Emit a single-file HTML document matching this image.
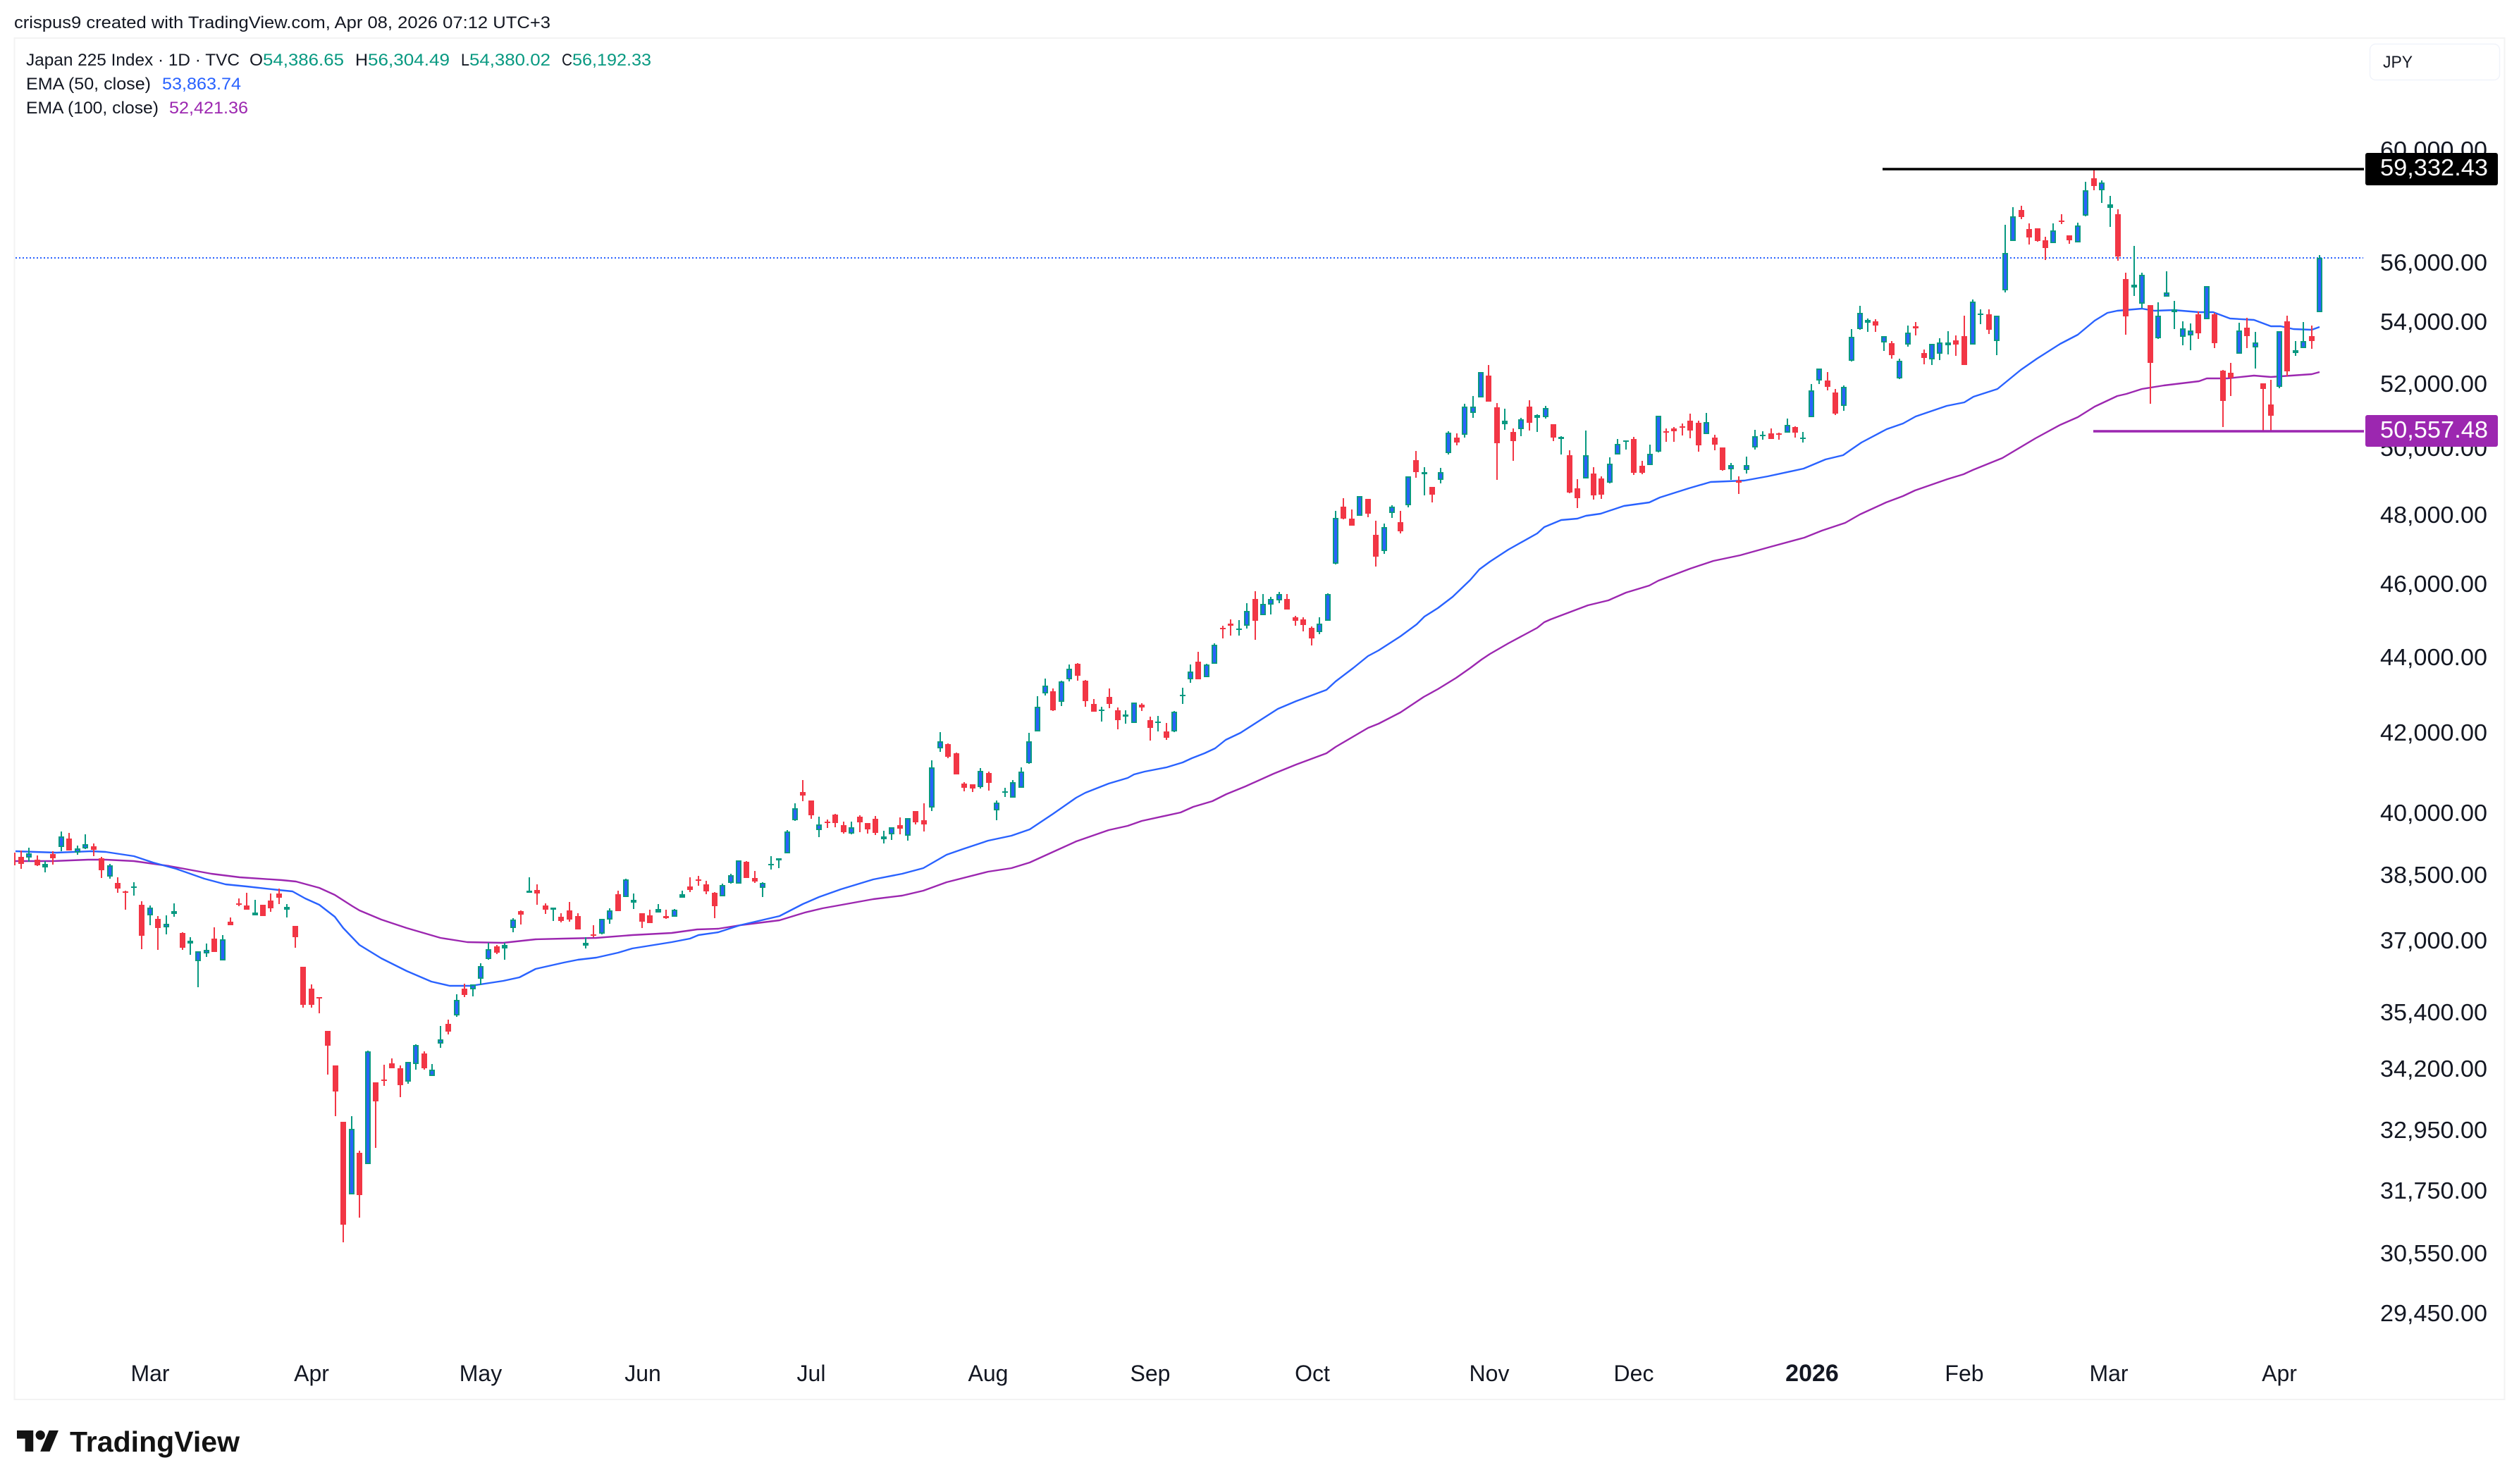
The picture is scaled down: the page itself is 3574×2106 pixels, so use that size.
<!DOCTYPE html>
<html lang="en">
<head>
<meta charset="utf-8">
<title>Japan 225 Index</title>
<style>
html,body{margin:0;padding:0;background:#fff;width:3574px;height:2106px;overflow:hidden}
svg{display:block}
text{font-family:"Liberation Sans",sans-serif;fill:#131722}
</style>
</head>
<body>
<svg width="3574" height="2106" viewBox="0 0 3574 2106" xmlns="http://www.w3.org/2000/svg">
<rect width="3574" height="2106" fill="#fff"/>
<rect x="20.5" y="54" width="3533" height="1932" fill="none" stroke="#f3f3f3" stroke-width="2"/>

<path d="M22 366H3353" stroke="#2962ff" stroke-width="2" stroke-dasharray="2 3" fill="none"/>

<polyline fill="none" stroke="#9c27b0" stroke-width="2.4" stroke-linejoin="round" points="22,1222 75,1222 125,1220 150,1220 190,1222 240,1229 300,1240 340,1245 400,1249 420,1251 453,1260 475,1270 500,1286 510,1292 541,1305 577,1317 625,1331 663,1337 714,1338 760,1333 800,1332 846,1331 897,1327 953,1324 989,1319 1019,1318 1050,1313 1106,1306 1142,1295 1167,1289 1239,1276 1280,1271 1310,1264 1343,1252 1402,1237 1435,1232 1461,1224 1494,1209 1527,1194 1573,1178 1600,1172 1620,1165 1675,1153 1693,1145 1720,1137 1740,1127 1767,1116 1807,1098 1839,1085 1882,1069 1895,1060 1941,1033 1956,1027 1987,1011 2020,989 2040,978 2066,962 2086,948 2102,936 2114,928 2140,913 2181,891 2191,883 2200,879 2253,859 2282,852 2307,841 2340,831 2353,824 2398,807 2431,796 2469,788 2512,776 2560,763 2585,753 2618,742 2639,730 2676,713 2700,704 2717,696 2763,680 2786,673 2799,667 2841,650 2888,622 2923,603 2948,592 2972,577 3004,562 3017,559 3039,552 3070,547 3120,541 3131,537 3160,537 3198,533 3222,535 3280,531 3291,528"/>
<polyline fill="none" stroke="#2962ff" stroke-width="2.4" stroke-linejoin="round" points="22,1208 50,1209 80,1210 130,1208 150,1209 190,1215 217,1224 250,1233 290,1247 320,1255 350,1258 395,1263 415,1265 433,1275 453,1284 475,1301 487,1317 510,1341 541,1360 577,1378 612,1393 638,1399 668,1399 714,1392 737,1387 760,1375 800,1366 820,1362 846,1359 877,1352 897,1346 953,1337 979,1332 991,1327 1019,1323 1050,1313 1106,1300 1139,1283 1162,1273 1193,1262 1239,1248 1280,1240 1310,1232 1343,1213 1366,1205 1402,1193 1435,1186 1461,1177 1494,1155 1527,1132 1540,1125 1573,1112 1600,1104 1609,1099 1624,1095 1655,1089 1678,1082 1691,1076 1709,1069 1724,1062 1739,1050 1760,1040 1813,1006 1839,995 1882,979 1895,967 1920,948 1941,931 1956,923 1987,903 2010,886 2021,875 2040,863 2061,847 2086,823 2099,808 2114,797 2140,780 2181,757 2191,748 2215,738 2238,736 2250,732 2271,729 2304,718 2340,713 2355,706 2396,693 2427,684 2475,682 2508,676 2559,665 2590,652 2615,646 2625,639 2641,628 2677,609 2700,601 2718,591 2762,576 2787,571 2800,563 2834,552 2867,525 2890,509 2923,488 2948,475 2972,455 2990,444 3004,441 3039,438 3057,441 3084,440 3120,443 3140,443 3164,452 3198,454 3222,463 3236,463 3254,467 3280,468 3291,464"/>

<!-- red wicks -->
<path fill="none" stroke="#f23645" stroke-width="2" d="M21 1210V1228M30 1207V1233M53 1214V1229M75 1208V1227M98 1182V1207M133 1197V1215M144 1216V1246M167 1245V1267M178 1264V1291M201 1279V1347M224 1300V1348M259 1323V1348M304 1316V1351M327 1302V1313M339 1275V1286M350 1267V1291M384 1268V1294M396 1261V1283M419 1314V1345M430 1372V1430M442 1397V1430M453 1415V1438M465 1463V1525M476 1512V1584M487 1592V1763M510 1633V1728M533 1536V1629M545 1511V1541M556 1502V1516M568 1512V1557M602 1492V1518M636 1447V1468M659 1396V1415M705 1341V1354M739 1292V1312M762 1255V1284M774 1282V1297M796 1296V1309M808 1280V1308M820 1296V1319M842 1313V1330M877 1264V1293M911 1296V1317M922 1291V1310M945 1291V1304M979 1245V1266M991 1243V1257M1002 1250V1269M1014 1266V1303M1059 1222V1246M1071 1236V1253M1139 1107V1137M1151 1136V1162M1174 1163V1175M1185 1155V1174M1197 1166V1183M1220 1157V1181M1231 1168V1183M1242 1158V1185M1277 1160V1184M1299 1151V1170M1311 1140V1180M1345 1055V1076M1357 1068V1099M1368 1110V1123M1380 1113V1124M1403 1095V1122M1494 977V1009M1529 941V966M1540 965V1003M1552 992V1010M1574 977V1005M1586 1004V1035M1620 998V1009M1632 1017V1051M1655 1026V1050M1700 925V964M1735 888V906M1746 879V902M1781 839V908M1826 843V865M1838 874V888M1849 876V896M1861 889V916M1906 707V737M1918 723V746M1941 708V734M1952 739V804M1987 725V757M2009 640V678M2032 691V713M2067 615V632M2112 518V570M2124 572V681M2147 608V654M2170 568V611M2204 602V626M2227 639V700M2238 680V721M2261 663V709M2272 676V708M2318 620V674M2330 654V673M2364 608V627M2375 606V627M2387 601V618M2398 587V622M2410 597V641M2433 617V639M2444 635V668M2467 676V701M2513 608V623M2524 614V624M2547 605V621M2593 528V554M2604 552V589M2661 453V471M2684 484V509M2718 457V476M2730 496V517M2775 476V505M2787 448V518M2822 439V474M2868 292V311M2879 317V347M2891 324V343M2902 336V369M2925 304V318M2936 334V346M2971 240V270M3005 297V370M3016 387V475M3051 433V573M3119 442V481M3142 444V494M3154 525V606M3165 515V562M3188 451V494M3211 544V611M3222 539V612M3245 448V534M3280 462V495"/>
<!-- red bodies -->
<path fill="none" stroke="#f23645" stroke-width="8" d="M30 1216V1226M53 1220V1228M75 1212V1218M98 1190V1207M133 1201V1206M144 1218V1235M167 1253V1261M178 1265V1267M201 1284V1328M224 1304V1317M259 1324V1345M304 1332V1351M327 1308V1313M339 1282V1284M350 1285V1291M373 1284V1300M384 1278V1289M396 1268V1274M419 1314V1330M430 1372V1426M442 1403V1426M453 1415V1417M465 1463V1484M476 1512V1549M487 1592V1738M510 1636V1696M533 1536V1563M545 1532V1534M556 1509V1516M568 1516V1540M602 1495V1516M636 1453V1464M659 1403V1412M705 1343V1352M739 1293V1298M762 1263V1268M774 1285V1291M796 1301V1307M808 1292V1305M820 1300V1319M842 1326V1328M877 1269V1293M911 1296V1308M922 1299V1310M945 1300V1303M979 1258V1263M991 1248V1250M1002 1255V1265M1014 1267V1286M1059 1223V1246M1071 1246V1251M1139 1124V1129M1151 1136V1157M1174 1166V1168M1185 1156V1168M1197 1171V1181M1220 1159V1167M1231 1168V1177M1242 1162V1182M1277 1171V1176M1299 1151V1167M1311 1164V1170M1345 1056V1074M1357 1069V1099M1368 1112V1118M1380 1113V1119M1403 1097V1111M1494 981V1008M1529 942V959M1540 966V995M1552 999V1010M1574 989V999M1586 1008V1022M1620 1000V1004M1632 1022V1033M1655 1038V1047M1700 939V964M1735 891V893M1746 885V888M1781 850V881M1826 850V865M1838 876V881M1849 879V887M1861 891V906M1906 719V736M1918 736V746M1941 708V729M1952 759V790M1987 741V754M2009 653V670M2032 691V702M2067 621V628M2112 533V570M2124 578V629M2147 613V626M2170 577V600M2204 602V621M2227 646V699M2238 693V707M2261 672V703M2272 679V702M2318 623V671M2330 661V671M2364 612V614M2375 608V612M2387 605V607M2398 597V611M2410 600V632M2433 621V631M2444 635V667M2467 682V685M2513 615V623M2524 615V617M2547 606V614M2593 540V549M2604 557V587M2661 456V462M2684 487V504M2718 463V466M2730 501V508M2775 483V489M2787 477V518M2822 446V468M2868 298V308M2879 325V337M2891 324V342M2902 341V352M2925 313V315M2936 334V341M2971 253V264M3005 304V364M3016 396V449M3051 433V515M3119 446V473M3142 446V487M3154 526V569M3165 529V536M3188 465V477M3211 544V552M3222 574V590M3245 456V527M3280 477V484"/>
<!-- green wicks -->
<path fill="none" stroke="#089981" stroke-width="2" d="M41 1203V1223M64 1222V1238M87 1180V1208M110 1200V1213M121 1184V1205M156 1226V1247M190 1252V1271M213 1285V1313M236 1299V1326M247 1282V1301M270 1330V1355M281 1350V1401M293 1339V1358M316 1327V1363M362 1277V1299M407 1283V1302M499 1584V1695M522 1491V1652M579 1507V1538M590 1482V1518M613 1510V1527M625 1456V1487M648 1411V1443M671 1397V1414M682 1367V1398M693 1338V1362M716 1338V1362M728 1303V1323M751 1245V1267M785 1288V1307M831 1330V1346M854 1304V1326M865 1289V1311M888 1247V1273M899 1268V1290M934 1283V1295M957 1290V1301M968 1264V1274M1025 1254V1272M1037 1240V1254M1048 1221V1254M1082 1252V1273M1094 1215V1234M1105 1218V1232M1117 1178V1211M1128 1140V1165M1162 1159V1188M1208 1166V1184M1254 1179V1197M1265 1174V1192M1288 1161V1193M1322 1079V1151M1334 1039V1067M1391 1090V1119M1414 1136V1164M1426 1118V1131M1437 1107V1132M1449 1089V1118M1460 1040V1084M1472 988V1038M1483 963V987M1506 966V1002M1517 943V967M1563 1003V1024M1597 1008V1027M1609 997V1026M1643 1016V1038M1666 1009V1039M1678 976V999M1689 943V969M1712 942V961M1723 913V942M1758 880V902M1769 856V892M1792 843V873M1803 847V872M1815 840V856M1872 876V900M1884 842V881M1895 725V801M1929 704V732M1964 743V786M1975 717V735M1998 676V720M2021 663V703M2044 664V686M2055 612V645M2078 573V621M2090 562V593M2101 528V564M2135 580V610M2158 593V619M2181 588V613M2193 576V594M2215 619V645M2250 611V679M2284 649V686M2295 623V645M2307 625V638M2341 631V660M2353 590V642M2421 586V616M2456 657V681M2478 648V672M2490 610V638M2501 612V624M2536 594V614M2558 613V628M2570 545V592M2581 523V545M2616 547V583M2627 467V513M2639 434V468M2650 452V471M2673 477V498M2695 509V538M2707 462V492M2741 488V518M2752 480V511M2764 470V503M2799 425V489M2810 439V460M2833 448V504M2845 319V415M2856 294V342M2913 317V345M2948 316V344M2959 258V307M2982 256V288M2994 278V322M3028 349V420M3039 387V437M3062 429V481M3074 385V421M3085 427V467M3097 456V490M3108 459V497M3131 406V453M3177 458V502M3200 471V523M3234 470V551M3257 484V505M3268 457V494M3291 362V443"/>
<!-- green bodies -->
<path fill="none" stroke="#089981" stroke-width="8" d="M41 1211V1217M64 1226V1231M87 1187V1202M110 1204V1210M121 1198V1204M156 1228V1244M190 1258V1260M213 1288V1299M236 1311V1316M247 1293V1297M270 1335V1339M281 1350V1364M293 1348V1353M316 1333V1363M362 1295V1299M407 1287V1291M499 1602V1695M522 1492V1652M579 1507V1535M590 1483V1510M613 1518V1527M625 1475V1481M648 1419V1441M671 1397V1404M682 1371V1389M693 1347V1361M716 1341V1346M728 1305V1317M751 1264V1267M785 1288V1291M831 1338V1342M854 1304V1325M865 1292V1305M888 1248V1273M899 1277V1281M934 1290V1295M957 1291V1301M968 1269V1274M1025 1256V1272M1037 1242V1253M1048 1221V1254M1082 1253V1260M1094 1226V1228M1105 1218V1221M1117 1180V1211M1128 1147V1164M1162 1170V1178M1208 1174V1183M1254 1187V1191M1265 1174V1184M1288 1161V1186M1322 1089V1146M1334 1052V1062M1391 1094V1117M1414 1139V1150M1426 1123V1125M1437 1110V1132M1449 1095V1118M1460 1052V1083M1472 1003V1038M1483 973V984M1506 967V996M1517 949V964M1563 1007V1009M1597 1014V1017M1609 997V1026M1643 1024V1026M1666 1010V1038M1678 986V988M1689 953V964M1712 943V961M1723 915V942M1758 892V894M1769 867V888M1792 857V873M1803 850V858M1815 843V852M1872 885V897M1884 843V881M1895 735V800M1929 704V732M1964 748V782M1975 719V728M1998 676V717M2021 670V673M2044 670V681M2055 614V643M2078 577V617M2090 577V586M2101 528V564M2135 597V602M2158 595V609M2181 589V593M2193 579V592M2215 620V623M2250 646V679M2284 658V685M2295 630V645M2307 625V627M2341 644V660M2353 590V641M2421 599V616M2456 660V666M2478 660V667M2490 619V635M2501 617V619M2536 603V614M2558 621V623M2570 554V592M2581 523V540M2616 549V576M2627 478V512M2639 444V467M2650 454V458M2673 477V486M2695 512V537M2707 472V489M2741 488V510M2752 486V502M2764 486V490M2799 428V489M2810 445V447M2833 448V484M2845 359V412M2856 307V342M2913 327V345M2948 320V344M2959 270V306M2982 259V270M2994 290V295M3028 404V408M3039 390V431M3062 448V480M3074 415V421M3085 439V443M3097 466V478M3108 469V476M3131 406V453M3177 469V502M3200 486V493M3234 470V549M3257 497V501M3268 484V494M3291 366V443"/>
<!-- blue inner of up candles -->
<path fill="none" stroke="#2962ff" stroke-width="4" d="M41 1213V1215M87 1189V1200M110 1206V1208M121 1200V1202M156 1230V1242M213 1290V1297M236 1313V1314M281 1352V1362M293 1350V1351M316 1335V1361M499 1604V1693M522 1494V1650M579 1509V1533M590 1485V1508M613 1520V1525M625 1477V1479M648 1421V1439M671 1399V1402M682 1373V1387M693 1349V1359M728 1307V1315M854 1306V1323M865 1294V1303M888 1250V1271M957 1293V1299M1025 1258V1270M1037 1244V1251M1048 1223V1252M1082 1255V1258M1117 1182V1209M1128 1149V1162M1162 1172V1176M1208 1176V1181M1265 1176V1182M1288 1163V1184M1322 1091V1144M1334 1054V1060M1391 1096V1115M1414 1141V1148M1437 1112V1130M1449 1097V1116M1460 1054V1081M1472 1005V1036M1483 975V982M1506 969V994M1517 951V962M1609 999V1024M1666 1012V1036M1689 955V962M1712 945V959M1723 917V940M1769 869V886M1792 859V871M1803 852V856M1815 845V850M1872 887V895M1884 845V879M1895 737V798M1929 706V730M1964 750V780M1975 721V726M1998 678V715M2044 672V679M2055 616V641M2078 579V615M2090 579V584M2101 530V562M2158 597V607M2193 581V590M2250 648V677M2284 660V683M2295 632V643M2341 646V658M2353 592V639M2421 601V614M2456 662V664M2478 662V665M2490 621V633M2536 605V612M2570 556V590M2581 525V538M2616 551V574M2627 480V510M2639 446V465M2673 479V484M2695 514V535M2707 474V487M2741 490V508M2752 488V500M2799 430V487M2833 450V482M2845 361V410M2856 309V340M2913 329V343M2948 322V342M2959 272V304M2982 261V268M3039 392V429M3062 450V478M3074 417V419M3097 468V476M3108 471V474M3131 408V451M3177 471V500M3200 488V491M3234 472V547M3268 486V492M3291 368V441"/>

<!-- horizontal annotation lines -->
<path d="M2671 240H3354" stroke="#000" stroke-width="3.5" fill="none"/>
<path d="M2970 612H3354" stroke="#9c27b0" stroke-width="3.5" fill="none"/>

<!-- header -->
<text x="20" y="40" font-size="24" textLength="761" lengthAdjust="spacingAndGlyphs">crispus9 created with TradingView.com, Apr 08, 2026 07:12 UTC+3</text>
<text x="37" y="93" font-size="24" textLength="303" lengthAdjust="spacingAndGlyphs">Japan 225 Index · 1D · TVC</text>
<text x="354" y="93" font-size="24" textLength="19" lengthAdjust="spacingAndGlyphs">O</text>
<text x="373" y="93" font-size="24" textLength="115" lengthAdjust="spacingAndGlyphs" style="fill:#089981">54,386.65</text>
<text x="504" y="93" font-size="24" textLength="18" lengthAdjust="spacingAndGlyphs">H</text>
<text x="522" y="93" font-size="24" textLength="116" lengthAdjust="spacingAndGlyphs" style="fill:#089981">56,304.49</text>
<text x="654" y="93" font-size="24" textLength="12" lengthAdjust="spacingAndGlyphs">L</text>
<text x="666" y="93" font-size="24" textLength="115" lengthAdjust="spacingAndGlyphs" style="fill:#089981">54,380.02</text>
<text x="797" y="93" font-size="24" textLength="15" lengthAdjust="spacingAndGlyphs">C</text>
<text x="812" y="93" font-size="24" textLength="112" lengthAdjust="spacingAndGlyphs" style="fill:#089981">56,192.33</text>
<text x="37" y="127" font-size="24" textLength="177" lengthAdjust="spacingAndGlyphs">EMA (50, close)</text>
<text x="230" y="127" font-size="24" textLength="112" lengthAdjust="spacingAndGlyphs" style="fill:#2962ff">53,863.74</text>
<text x="37" y="161" font-size="24" textLength="188" lengthAdjust="spacingAndGlyphs">EMA (100, close)</text>
<text x="240" y="161" font-size="24" textLength="112" lengthAdjust="spacingAndGlyphs" style="fill:#9c27b0">52,421.36</text>

<!-- currency box -->
<rect x="3362.5" y="62.5" width="184" height="51" rx="8" fill="#fff" stroke="#f0f3fa" stroke-width="1.5"/>
<text x="3381" y="96" font-size="24" textLength="42" lengthAdjust="spacingAndGlyphs">JPY</text>

<!-- price scale -->
<g font-size="33">
<text x="3377" y="224" textLength="152" lengthAdjust="spacingAndGlyphs">60,000.00</text>
<text x="3377" y="384" textLength="152" lengthAdjust="spacingAndGlyphs">56,000.00</text>
<text x="3377" y="468" textLength="152" lengthAdjust="spacingAndGlyphs">54,000.00</text>
<text x="3377" y="556" textLength="152" lengthAdjust="spacingAndGlyphs">52,000.00</text>
<text x="3377" y="647" textLength="152" lengthAdjust="spacingAndGlyphs">50,000.00</text>
<text x="3377" y="742" textLength="152" lengthAdjust="spacingAndGlyphs">48,000.00</text>
<text x="3377" y="840" textLength="152" lengthAdjust="spacingAndGlyphs">46,000.00</text>
<text x="3377" y="944" textLength="152" lengthAdjust="spacingAndGlyphs">44,000.00</text>
<text x="3377" y="1051" textLength="152" lengthAdjust="spacingAndGlyphs">42,000.00</text>
<text x="3377" y="1165" textLength="152" lengthAdjust="spacingAndGlyphs">40,000.00</text>
<text x="3377" y="1253" textLength="152" lengthAdjust="spacingAndGlyphs">38,500.00</text>
<text x="3377" y="1346" textLength="152" lengthAdjust="spacingAndGlyphs">37,000.00</text>
<text x="3377" y="1448" textLength="152" lengthAdjust="spacingAndGlyphs">35,400.00</text>
<text x="3377" y="1528" textLength="152" lengthAdjust="spacingAndGlyphs">34,200.00</text>
<text x="3377" y="1615" textLength="152" lengthAdjust="spacingAndGlyphs">32,950.00</text>
<text x="3377" y="1701" textLength="152" lengthAdjust="spacingAndGlyphs">31,750.00</text>
<text x="3377" y="1790" textLength="152" lengthAdjust="spacingAndGlyphs">30,550.00</text>
<text x="3377" y="1875" textLength="152" lengthAdjust="spacingAndGlyphs">29,450.00</text>
</g>

<!-- price labels -->
<rect x="3356" y="217" width="188" height="46" rx="3" fill="#000"/>
<text x="3377" y="249" font-size="33" textLength="153" lengthAdjust="spacingAndGlyphs" style="fill:#fff">59,332.43</text>
<rect x="3356" y="589" width="188" height="45" rx="3" fill="#9c27b0"/>
<text x="3377" y="621" font-size="33" textLength="153" lengthAdjust="spacingAndGlyphs" style="fill:#fff">50,557.48</text>

<!-- time scale -->
<g font-size="32" text-anchor="middle">
<text x="213" y="1960">Mar</text>
<text x="442" y="1960">Apr</text>
<text x="682" y="1960">May</text>
<text x="912" y="1960">Jun</text>
<text x="1151" y="1960">Jul</text>
<text x="1402" y="1960">Aug</text>
<text x="1632" y="1960">Sep</text>
<text x="1862" y="1960">Oct</text>
<text x="2113" y="1960">Nov</text>
<text x="2318" y="1960">Dec</text>
<text x="2571" y="1960" font-weight="bold" font-size="34">2026</text>
<text x="2787" y="1960">Feb</text>
<text x="2992" y="1960">Mar</text>
<text x="3234" y="1960">Apr</text>
</g>

<!-- logo -->
<g transform="translate(24 2023.4) scale(1.66)" fill="#131313">
<path d="M14 22H7V11H0V4h14v18zM28 22h-8l7.5-18h8L28 22z"/>
<circle cx="20" cy="8" r="4"/>
</g>
<text x="99" y="2060" font-size="41" font-weight="bold" textLength="241" lengthAdjust="spacingAndGlyphs" style="fill:#131313">TradingView</text>
</svg>
</body>
</html>
